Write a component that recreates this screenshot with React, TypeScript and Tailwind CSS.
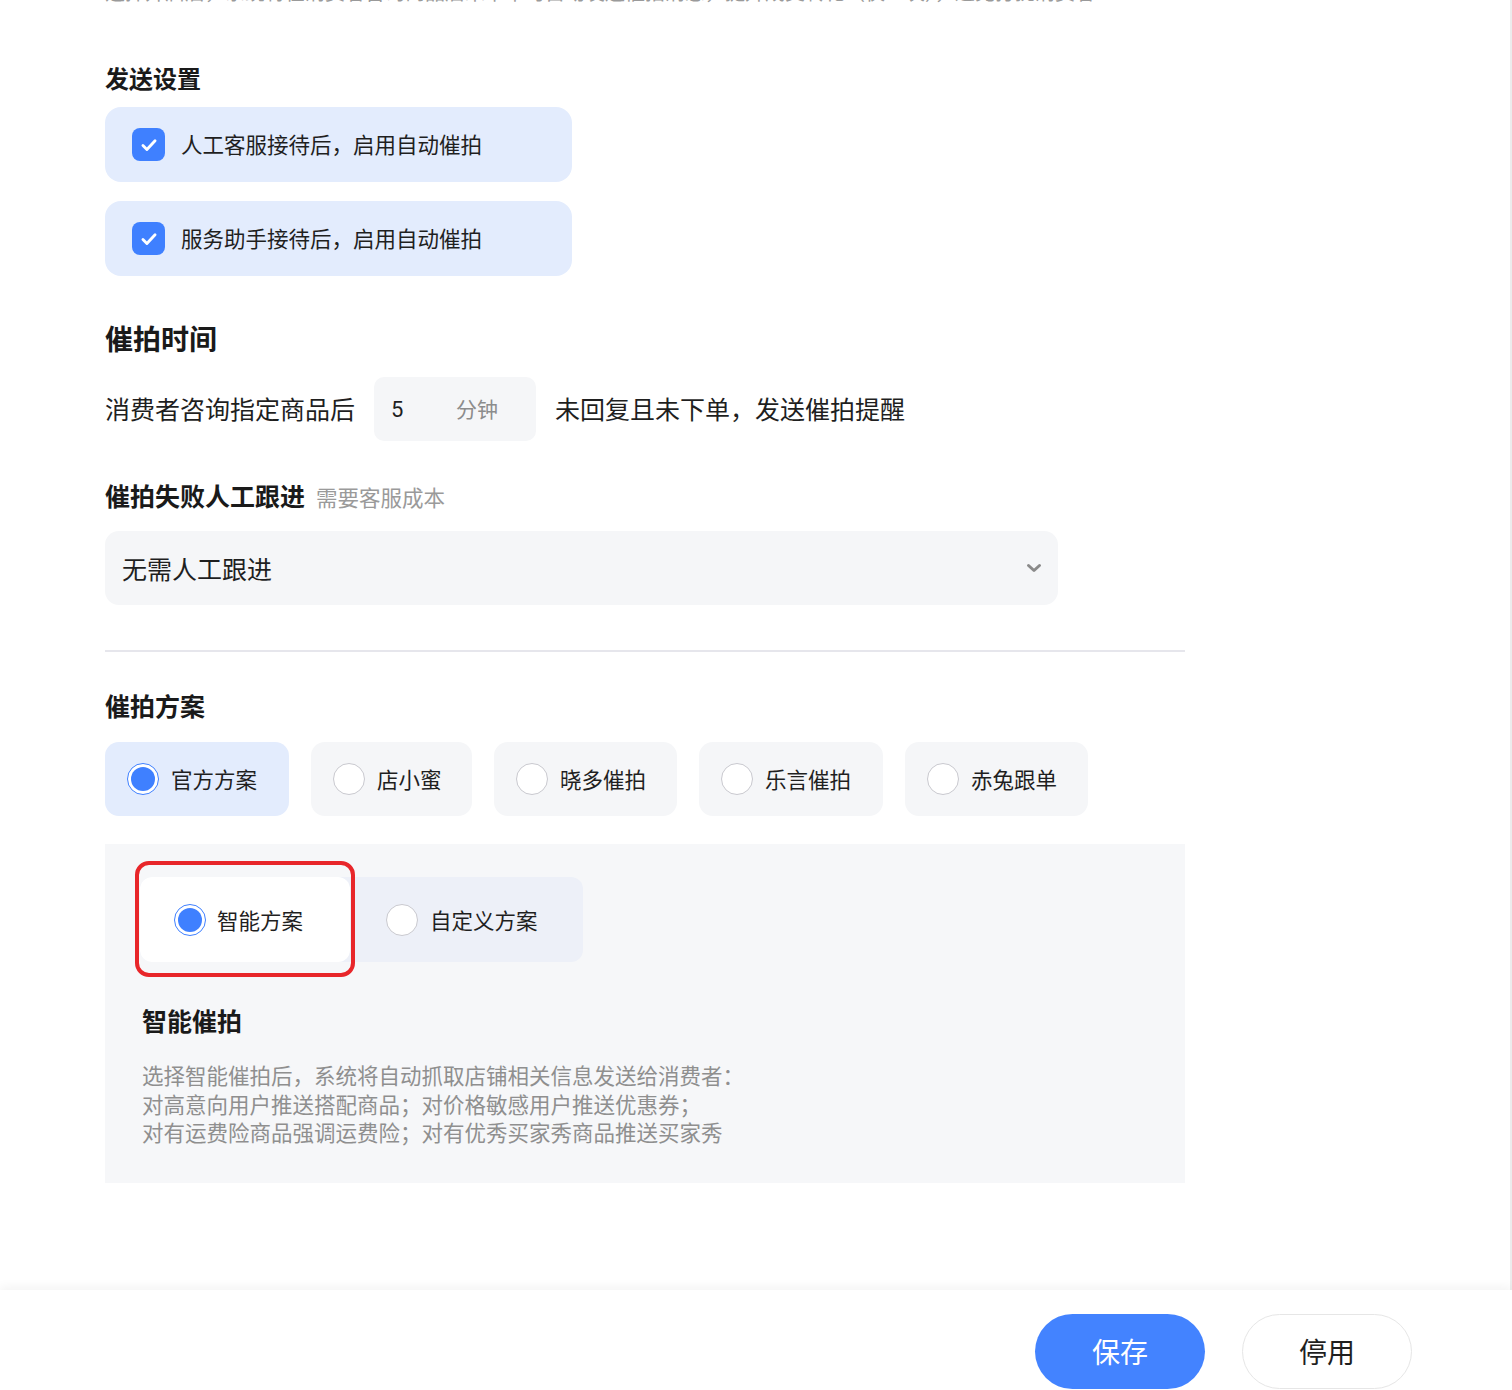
import React, { useState } from 'react';

const FONT = { fontFamily: '"PingFang SC", "Noto Sans CJK SC", "Noto Sans", sans-serif' };

function CheckCard({ label }: { label: string }) {
  return (
    <div className="flex h-[75px] w-[467px] items-center rounded-[16px] bg-[#e3ecfd] pl-[27px]">
      <span className="flex h-[33px] w-[33px] items-center justify-center rounded-[8px] bg-[#3f80ff]">
        <svg width="22" height="22" viewBox="0 0 20 20" fill="none">
          <path d="M4.5 10.5l3.6 3.6L15.5 6.2" stroke="#fff" strokeWidth="2.6" strokeLinecap="round" strokeLinejoin="round" />
        </svg>
      </span>
      <span className="ml-[16px] text-[21.5px] text-[#1f1f1f]">{label}</span>
    </div>
  );
}

function Radio({ checked }: { checked: boolean }) {
  if (checked) {
    return (
      <span className="flex h-[32px] w-[32px] shrink-0 items-center justify-center rounded-full border-[1.5px] border-[#3f80ff] bg-white">
        <span className="h-[24px] w-[24px] rounded-full bg-[#3f80ff]" />
      </span>
    );
  }
  return <span className="h-[32px] w-[32px] shrink-0 rounded-full border border-[#c9c9cf] bg-white" />;
}

const plans = [
  { name: '官方方案', w: 'w-[184px]' },
  { name: '店小蜜', w: 'w-[161px]' },
  { name: '晓多催拍', w: 'w-[183px]' },
  { name: '乐言催拍', w: 'w-[184px]' },
  { name: '赤兔跟单', w: 'w-[183px]' },
];

export default function App() {
  const [plan, setPlan] = useState('官方方案');
  const [mode, setMode] = useState('智能方案');

  return (
    <div className="flex h-[1390px] w-[1512px] flex-col overflow-hidden bg-white" style={FONT}>
      <div className="flex-1 overflow-hidden border-r-2 border-[#ececec] pl-[105px]">
        <p className="-mt-[19px] h-[21px] text-[20px] leading-[21px] text-[#9a9a9a] whitespace-nowrap">
          选择开启后，系统将在消费者咨询商品后未下单时自动发送催拍消息，提升成交转化（仅一次），避免打扰消费者
        </p>

        <h2 className="mt-[61px] text-[24px] font-bold leading-[30px] text-[#1a1a1a]">发送设置</h2>
        <div className="mt-[14px] flex flex-col gap-[19px]">
          <CheckCard label="人工客服接待后，启用自动催拍" />
          <CheckCard label="服务助手接待后，启用自动催拍" />
        </div>

        <h2 className="mt-[45px] text-[28px] font-bold leading-[34px] text-[#1a1a1a]">催拍时间</h2>
        <div className="mt-[22px] flex items-center text-[25px] text-[#1f1f1f]">
          <span>消费者咨询指定商品后</span>
          <div className="ml-[19px] flex h-[64px] w-[162px] items-center rounded-[10px] bg-[#f5f6f8] pl-[17px]">
            <span className="w-[65px] text-[22px] text-[#1f1f1f]" style={{ fontFamily: 'Roboto, "Noto Sans CJK SC", sans-serif' }}>5</span>
            <span className="text-[21px] text-[#8c8c8c]">分钟</span>
          </div>
          <span className="ml-[19px]">未回复且未下单，发送催拍提醒</span>
        </div>

        <div className="mt-[38px] flex items-baseline">
          <span className="text-[25px] font-bold leading-[32px] text-[#1a1a1a]">催拍失败人工跟进</span>
          <span className="ml-[11px] text-[21.5px] text-[#9a9a9a]">需要客服成本</span>
        </div>
        <div className="mt-[18px] flex h-[74px] w-[953px] items-center justify-between rounded-[14px] bg-[#f5f6f8] pl-[17px] pr-[16px]">
          <span className="text-[25px] text-[#1f1f1f]">无需人工跟进</span>
          <svg width="16" height="10" viewBox="0 0 16 10" fill="none">
            <path d="M2.5 2.5l5.5 5 5.5-5" stroke="#8a8a8a" strokeWidth="3" strokeLinecap="round" strokeLinejoin="round" />
          </svg>
        </div>

        <div className="mt-[45px] h-[2px] w-[1080px] bg-[#e6e6ec]" />

        <h2 className="mt-[38px] text-[25px] font-bold leading-[30px] text-[#1a1a1a]">催拍方案</h2>
        <div className="mt-[22px] flex gap-[22px]">
          {plans.map((p) => {
            const on = plan === p.name;
            return (
              <button
                key={p.name}
                onClick={() => setPlan(p.name)}
                className={`flex h-[74px] ${p.w} items-center rounded-[14px] pl-[22px] ${on ? 'bg-[#e3ecfd]' : 'bg-[#f5f6f8]'}`}
              >
                <Radio checked={on} />
                <span className="ml-[12px] text-[21.5px] text-[#1f1f1f]">{p.name}</span>
              </button>
            );
          })}
        </div>

        <div className="mt-[28px] h-[339px] w-[1080px] bg-[#f6f7f9] pl-[35px] pt-[33px]">
          <div className="flex h-[85px] w-[443px] rounded-[12px] bg-[#edf0f8]">
            <div className="relative">
              <button
                onClick={() => setMode('智能方案')}
                className={`flex h-[85px] w-[210px] items-center rounded-[12px] pl-[34px] ${mode === '智能方案' ? 'bg-white' : ''}`}
              >
                <Radio checked={mode === '智能方案'} />
                <span className="ml-[11px] text-[21.5px] text-[#1f1f1f]">智能方案</span>
              </button>
              <div className="pointer-events-none absolute -left-[5px] -right-[5px] -top-[16px] -bottom-[15px] rounded-[14px] border-[4px] border-[#e8262a]" />
            </div>
            <button
              onClick={() => setMode('自定义方案')}
              className={`flex h-[85px] flex-1 items-center rounded-[12px] pl-[36px] ${mode === '自定义方案' ? 'bg-white' : ''}`}
            >
              <Radio checked={mode === '自定义方案'} />
              <span className="ml-[12px] text-[21.5px] text-[#1f1f1f]">自定义方案</span>
            </button>
          </div>

          <h3 className="ml-[2px] mt-[43px] text-[25px] font-bold leading-[30px] text-[#1a1a1a]">智能催拍</h3>
          <div className="ml-[2px] mt-[26px] text-[21.5px] leading-[28.5px] text-[#8f8f8f]">
            <p>选择智能催拍后，系统将自动抓取店铺相关信息发送给消费者：</p>
            <p>对高意向用户推送搭配商品；对价格敏感用户推送优惠券；</p>
            <p>对有运费险商品强调运费险；对有优秀买家秀商品推送买家秀</p>
          </div>
        </div>
      </div>

      <footer className="flex h-[100px] shrink-0 items-center justify-end gap-[37px] bg-white pr-[100px] pt-[22px] shadow-[0_-3px_10px_rgba(0,0,0,0.05)]">
        <button className="h-[75px] w-[170px] rounded-full bg-[#4383ff] text-[28px] text-white">保存</button>
        <button className="h-[75px] w-[170px] rounded-full border border-[#e6e6e6] bg-white text-[28px] text-[#1f1f1f]">停用</button>
      </footer>
    </div>
  );
}
